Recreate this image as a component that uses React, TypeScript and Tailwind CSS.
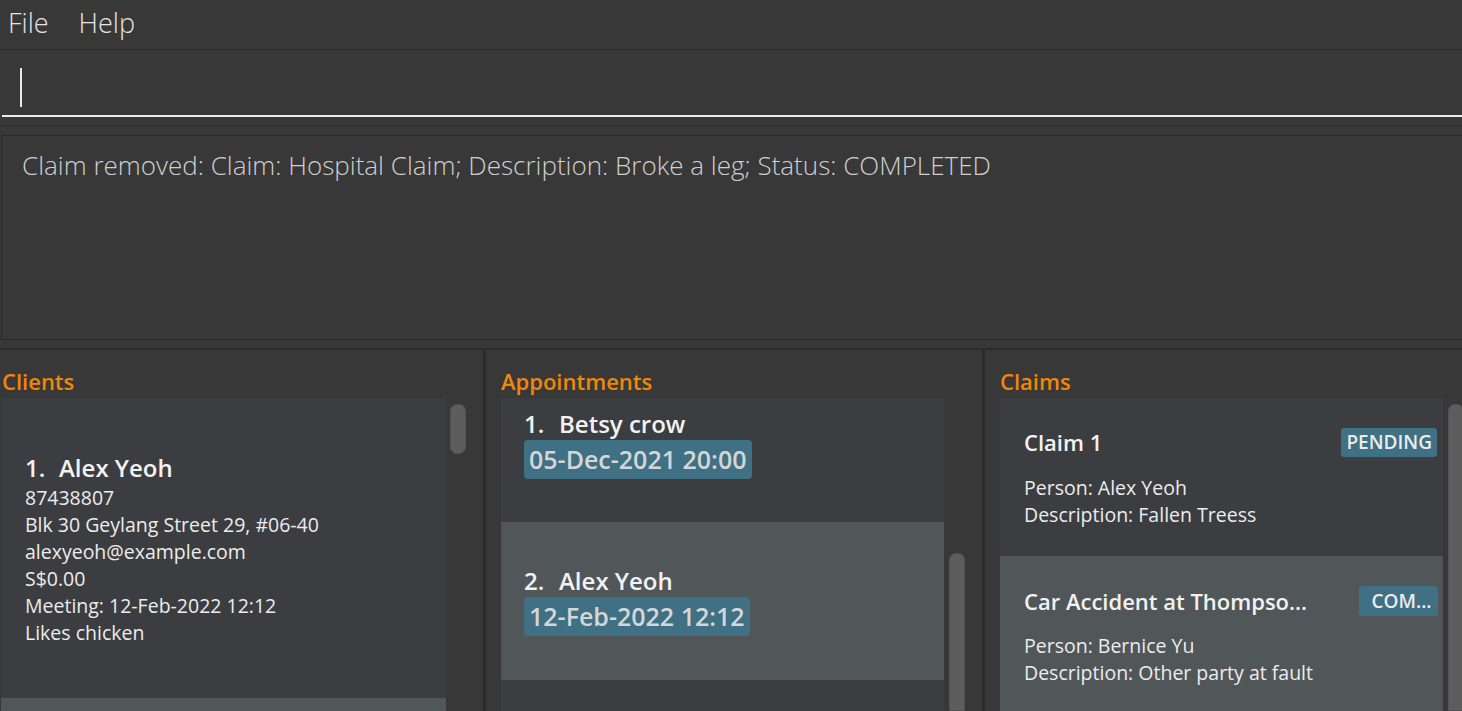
import React from "react";

const font = "font-['Open_Sans',_'Noto_Sans',_sans-serif]";

function Thumb({ className }: { className: string }) {
  return <div className={"bg-[#5d5d5d] border border-[#535353] " + className} />;
}

export default function App() {
  return (
    <div className={"w-[1462px] h-[711px] overflow-hidden bg-[#383838] flex flex-col " + font}>
      {/* menu bar */}
      <div className="h-[49px] shrink-0 flex items-start pl-[8px] pt-[3px] gap-[30px] text-[27px] leading-[40px] font-light text-[#e4e4e4]">
        <span>File</span>
        <span>Help</span>
      </div>
      <div className="h-[1px] shrink-0 bg-[#2c2c2c]" />
      {/* command box */}
      <div className="h-[67px] shrink-0 pl-[2px]">
        <div className="h-full border-b-2 border-[#ececec] pl-[18px] pt-[18px]">
          <div className="w-[2px] h-[39px] bg-[#e8e8e8]" />
        </div>
      </div>
      <div className="h-[8px] shrink-0" />
      <div className="h-[1px] shrink-0 bg-[#2c2c2c]" />
      <div className="h-[9px] shrink-0" />
      {/* result display */}
      <div className="h-[205px] shrink-0 ml-[1px] border border-r-0 border-[#2a2a2a] pl-[20px] pt-[11px]">
        <p className="text-[26px] leading-[36px] font-light text-[#cfcfcf] whitespace-nowrap">
          Claim removed: Claim: Hospital Claim; Description: Broke a leg; Status: COMPLETED
        </p>
      </div>
      <div className="h-[8px] shrink-0" />
      <div className="h-[2px] shrink-0 bg-[#2c2c2c]" />
      {/* lists */}
      <div className="flex-1 flex min-h-0">
        {/* Clients */}
        <div className="w-[483px] shrink-0 flex flex-col pl-[1px]">
          <div className="h-[48px] shrink-0 pt-[16px] text-[22px] leading-[30px] font-semibold text-[#f0870a] pl-[1px]">Clients</div>
          <div className="flex-1 flex min-h-0">
            <div className="w-[445px] shrink-0 flex flex-col bg-[#3c3d40]">
              <div className="h-[300px] shrink-0 bg-[#3c3d40] flex flex-col justify-center pl-[24px] pt-[3px]">
                <div className="text-[24px] leading-[30px] font-semibold text-[#f2f2f2] flex">
                  <span className="w-[34px]">1.</span>
                  <span>Alex Yeoh</span>
                </div>
                <div className="mt-[1px] text-[19.5px] leading-[27px] text-[#ececec]">
                  <div>87438807</div>
                  <div>Blk 30 Geylang Street 29, #06-40</div>
                  <div>alexyeoh@example.com</div>
                  <div>S$0.00</div>
                  <div>Meeting: 12-Feb-2022 12:12</div>
                  <div>Likes chicken</div>
                </div>
              </div>
              <div className="flex-1 bg-[#515659]" />
            </div>
            <div className="pl-[4px] pt-[6px]">
              <Thumb className="w-[16px] h-[50px] rounded-[7px]" />
            </div>
          </div>
        </div>
        <div className="w-[3px] shrink-0 bg-[#2b2b2b]" />
        {/* Appointments */}
        <div className="w-[496px] shrink-0 flex flex-col pl-[15px]">
          <div className="h-[48px] shrink-0 pt-[16px] text-[22px] leading-[30px] font-semibold text-[#f0870a]">Appointments</div>
          <div className="flex-1 flex min-h-0">
            <div className="w-[443px] shrink-0 flex flex-col bg-[#3c3d40]">
              <div className="h-[124px] shrink-0 pl-[23px] pt-[11px]">
                <div className="text-[24px] leading-[30px] font-semibold text-[#f2f2f2] flex">
                  <span className="w-[35px]">1.</span>
                  <span>Betsy crow</span>
                </div>
                <div className="mt-[1px] inline-block h-[39px] rounded-[4px] bg-[#3f7083] px-[5px] text-[25px] leading-[39px] font-semibold text-[#d4d6d8]">
                  05-Dec-2021 20:00
                </div>
              </div>
              <div className="h-[158px] shrink-0 bg-[#515659] pl-[23px] flex flex-col justify-center">
                <div className="text-[24px] leading-[30px] font-semibold text-[#f2f2f2] flex">
                  <span className="w-[35px]">2.</span>
                  <span>Alex Yeoh</span>
                </div>
                <div className="mt-[1px] self-start h-[39px] rounded-[4px] bg-[#3f7083] px-[5px] text-[25px] leading-[39px] font-semibold text-[#d4d6d8]">
                  12-Feb-2022 12:12
                </div>
              </div>
              <div className="flex-1 bg-[#3c3d40]" />
            </div>
            <div className="pl-[5px] pt-[155px] flex flex-col">
              <Thumb className="w-[16px] flex-1 rounded-t-[7px]" />
            </div>
          </div>
        </div>
        <div className="w-[3px] shrink-0 bg-[#2b2b2b]" />
        {/* Claims */}
        <div className="flex-1 flex flex-col pl-[15px]">
          <div className="h-[48px] shrink-0 pt-[16px] text-[22px] leading-[30px] font-semibold text-[#f0870a]">Claims</div>
          <div className="flex-1 flex min-h-0">
            <div className="w-[443px] shrink-0 flex flex-col bg-[#3c3d40]">
              <div className="h-[158px] shrink-0 bg-[#3c3d40] pl-[24px] pr-[6px] pt-[30px]">
                <div className="flex items-center justify-between h-[29px]">
                  <span className="text-[22px] leading-[29px] font-semibold text-[#f2f2f2]">Claim 1</span>
                  <span className="h-[29px] rounded-[3px] bg-[#3f7083] px-[5px] text-[19px] leading-[29px] font-semibold text-[#ececec]">PENDING</span>
                </div>
                <div className="mt-[17px] text-[19.5px] leading-[27px] text-[#ececec]">
                  <div>Person: Alex Yeoh</div>
                  <div>Description: Fallen Treess</div>
                </div>
              </div>
              <div className="flex-1 bg-[#515659] pl-[24px] pr-[5px] pt-[30px]">
                <div className="flex items-center justify-between h-[30px]">
                  <span className="text-[22px] leading-[30px] font-semibold text-[#f2f2f2] whitespace-nowrap">Car Accident at Thompso...</span>
                  <span className="w-[79px] h-[30px] rounded-[3px] bg-[#3f7083] text-center text-[19px] leading-[30px] font-semibold text-[#ececec] pl-[6px]">COM...</span>
                </div>
                <div className="mt-[16px] text-[19.5px] leading-[27px] text-[#ececec]">
                  <div>Person: Bernice Yu</div>
                  <div>Description: Other party at fault</div>
                </div>
              </div>
            </div>
            <div className="pl-[5px] pt-[6px] flex flex-col flex-1">
              <Thumb className="w-[16px] flex-1 rounded-t-[7px]" />
            </div>
          </div>
        </div>
      </div>
    </div>
  );
}
